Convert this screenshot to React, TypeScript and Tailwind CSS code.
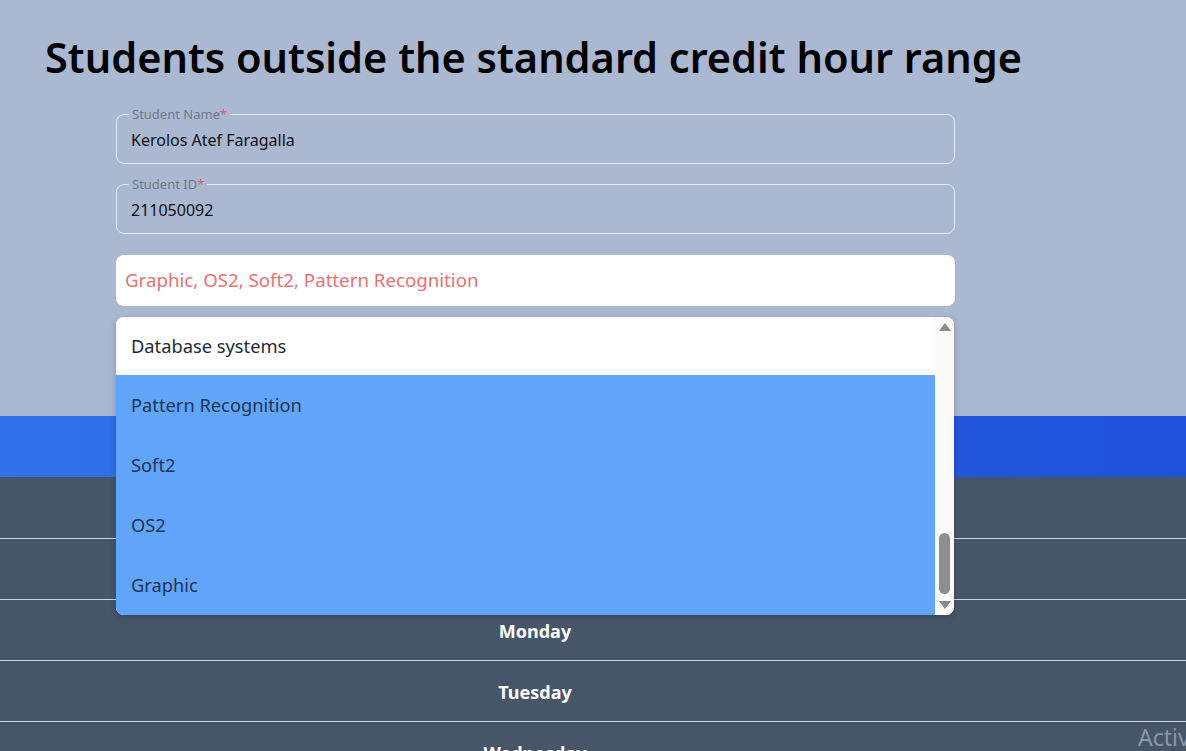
const options = [
  { label: 'Database systems', selected: false },
  { label: 'Pattern Recognition', selected: true },
  { label: 'Soft2', selected: true },
  { label: 'OS2', selected: true },
  { label: 'Graphic', selected: true },
]

const days = ['', '', 'Monday', 'Tuesday', 'Wednesday']

function OutlinedField({ label, value }: { label: string; value: string }) {
  return (
    <div className="relative flex h-[50px] items-center rounded-lg border border-[#e4e9f2] pl-[14px]">
      <span className="absolute -top-[8px] left-[12px] bg-[#aab8d1] px-[3px] text-[13px] leading-[14px] text-[#6f7a8c]">
        {label}
        <span className="text-[#e05a68]">*</span>
      </span>
      <span className="pt-[2px] text-[16px] text-[#111]">{value}</span>
    </div>
  )
}

export default function App() {
  return (
    <div className="relative min-h-screen overflow-hidden bg-[#475569] font-['Noto_Sans',sans-serif]">
      {/* Filter section */}
      <div className="h-[416px] bg-[#aab8d1] pt-[29px]">
        <h1 className="pl-[45px] text-[41.5px] font-semibold leading-[56px] text-black">
          Students outside the standard credit hour range
        </h1>

        <div className="relative ml-[116px] mt-[29px] flex w-[839px] flex-col">
          <OutlinedField label="Student Name" value="Kerolos Atef Faragalla" />
          <div className="mt-[20px]">
            <OutlinedField label="Student ID" value="211050092" />
          </div>

          <div className="mt-[21px] flex h-[51px] items-center rounded-lg bg-white px-[9px] text-[18.7px] text-[#e57373]">
            Graphic, OS2, Soft2, Pattern Recognition
          </div>

          {/* Open course list */}
          <div className="absolute left-0 top-[203px] z-10 flex h-[298px] w-[838px] overflow-hidden rounded-lg bg-white shadow-[0_2px_6px_rgba(15,23,42,0.25)]">
            <div className="flex flex-1 flex-col">
              {options.map((option, i) => (
                <div
                  key={option.label}
                  className={`flex shrink-0 items-center pl-[15px] text-[18.3px] ${i === 0 ? 'h-[58px]' : 'h-[60px]'} ${
                    option.selected ? 'bg-[#60a5fa] text-[#1e3556]' : 'bg-white text-[#1f2937]'
                  }`}
                >
                  {option.label}
                </div>
              ))}
            </div>
            <div className="flex w-[19px] flex-col items-center bg-[#fafafa]">
              <svg className="mt-[6px] h-[8px] w-[12px]" viewBox="0 0 12 8">
                <path d="M6 0L12 8H0z" fill="#8a8a8a" />
              </svg>
              <div className="mt-auto h-[61px] w-[11px] rounded-full bg-[#8e8e8e]" />
              <svg className="mb-[6px] mt-[7px] h-[8px] w-[12px]" viewBox="0 0 12 8">
                <path d="M0 0H12L6 8z" fill="#8a8a8a" />
              </svg>
            </div>
          </div>
        </div>
      </div>

      {/* Schedule table */}
      <div className="h-[61px] bg-gradient-to-r from-[#3172ea] to-[#1f51d9]" />
      {days.map((day, i) => (
        <div key={i} className={`flex h-[61px] ${i > 0 ? 'border-t border-[#cbd5e1]' : ''}`}>
          <div className="flex w-[1070px] items-center justify-center pt-[2px] text-[18px] font-bold text-white">
            {day}
          </div>
        </div>
      ))}

      <div className="absolute left-[1138px] top-[720px] text-[23px] text-[#8b96a6]">Activ</div>
    </div>
  )
}
